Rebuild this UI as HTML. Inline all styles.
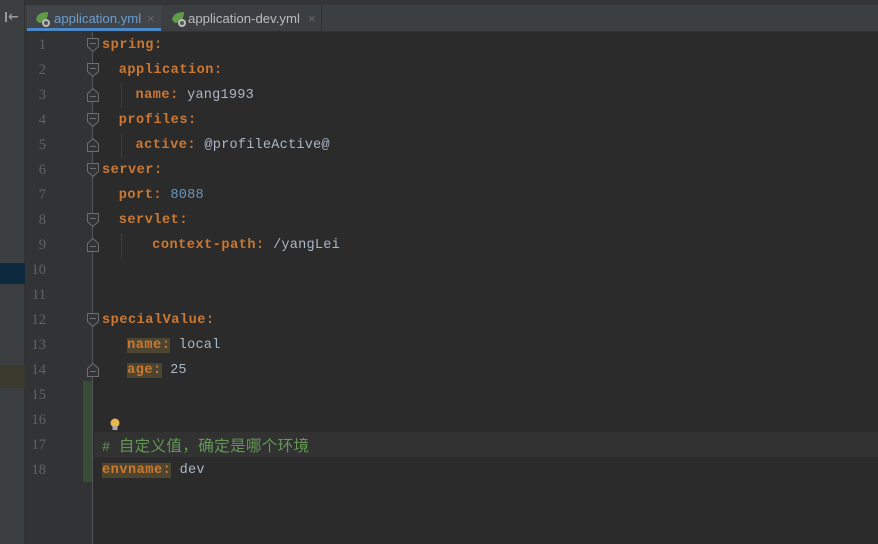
<!DOCTYPE html>
<html><head><meta charset="utf-8"><style>
*{margin:0;padding:0;box-sizing:border-box}
body{width:878px;height:544px;background:#2b2b2b;position:relative;overflow:hidden;font-family:"Liberation Mono","Noto Sans CJK SC",monospace}
.strip{position:absolute;left:0;top:0;width:25px;height:544px;background:#3c3f41;border-right:1px solid #2f3133}
.tabs{position:absolute;left:25px;top:0;right:0;height:32px;background:#3c3f41;border-top:5px solid #333537;border-bottom:1px solid #323232}
.tab{position:absolute;top:0;height:26px;font-family:"Liberation Sans",sans-serif;font-size:13.2px;line-height:27px;color:#bbbbbb}
.gut{position:absolute;left:25px;top:32px;width:68px;height:512px;background:#313335;border-right:1px solid #555}
.ln{position:absolute;left:25px;width:21px;text-align:right;color:#606366;font-family:"Liberation Serif",serif;font-size:14.5px;height:25px;line-height:25px}
.code{position:absolute;left:102px;font-size:13.6px;letter-spacing:0.2px;height:25px;line-height:25px;color:#a9b7c6;white-space:pre}
.k{color:#cc7832;font-weight:bold;letter-spacing:0.5px}
.n{color:#6897bb}
.hl{background:#4c452f}
.c{color:#629755}
.cj{font-family:"Noto Sans CJK SC",sans-serif;font-size:15.6px;letter-spacing:0.3px}
</style></head><body>
<div class="strip">
<svg width="25" height="32" style="position:absolute;top:0;left:0"><rect x="5" y="12" width="2" height="10" fill="#999"/><rect x="9" y="16" width="9" height="1.5" fill="#999"/><path d="M9 16.7 L12 14 M9 16.7 L12 19.5" stroke="#999" stroke-width="1.3" fill="none"/></svg>
<div style="position:absolute;top:263px;left:0;width:25px;height:21px;background:#0d293e"></div>
<div style="position:absolute;top:365px;left:0;width:25px;height:23px;background:#3a3a2e"></div>
</div>
<div class="tabs">
<div class="tab" style="left:2px;width:134px;background:#414448;border-bottom:3px solid #4a88c7;color:#6a9fcf">
<svg width="18" height="18" style="position:absolute;left:7px;top:5px"><path d="M2 10 Q3 2 14 2 Q14 12 5 13 Z" fill="#5f9a48"/><circle cx="12" cy="13" r="4" fill="#bbb"/><circle cx="12" cy="13" r="2" fill="#555"/></svg>
<span style="position:absolute;left:27px">application.yml</span><span style="position:absolute;left:120px;color:#666">×</span></div>
<div class="tab" style="left:137px;width:160px;border-right:1px solid #323232">
<svg width="18" height="18" style="position:absolute;left:8px;top:5px"><path d="M2 10 Q3 2 14 2 Q14 12 5 13 Z" fill="#5f9a48"/><circle cx="12" cy="13" r="4" fill="#bbb"/><circle cx="12" cy="13" r="2" fill="#555"/></svg>
<span style="position:absolute;left:26px">application-dev.yml</span><span style="position:absolute;left:146px;color:#666">×</span></div>
</div>
<div class="gut"></div>
<div style="position:absolute;left:83px;top:381px;width:9px;height:101px;background:#384c38"></div>
<div style="position:absolute;left:94px;top:432px;right:0;height:25px;background:#323232"></div>

<div class="ln" style="top:33px">1</div>
<div class="ln" style="top:58px">2</div>
<div class="ln" style="top:83px">3</div>
<div class="ln" style="top:108px">4</div>
<div class="ln" style="top:133px">5</div>
<div class="ln" style="top:158px">6</div>
<div class="ln" style="top:183px">7</div>
<div class="ln" style="top:208px">8</div>
<div class="ln" style="top:233px">9</div>
<div class="ln" style="top:258px">10</div>
<div class="ln" style="top:283px">11</div>
<div class="ln" style="top:308px">12</div>
<div class="ln" style="top:333px">13</div>
<div class="ln" style="top:358px">14</div>
<div class="ln" style="top:383px">15</div>
<div class="ln" style="top:408px">16</div>
<div class="ln" style="top:433px">17</div>
<div class="ln" style="top:458px">18</div>

<svg style="position:absolute;left:0;top:0" width="878" height="544">
<g fill="#313335" stroke="#6e6e6e" stroke-width="1">
<path d="M87.5 38.5h11v8l-5.5 5l-5.5-5z"/><path d="M87.5 63.5h11v8l-5.5 5l-5.5-5z"/>
<path d="M87.5 101.5h11v-8l-5.5-5l-5.5 5z"/><path d="M87.5 113.5h11v8l-5.5 5l-5.5-5z"/>
<path d="M87.5 151.5h11v-8l-5.5-5l-5.5 5z"/><path d="M87.5 163.5h11v8l-5.5 5l-5.5-5z"/>
<path d="M87.5 213.5h11v8l-5.5 5l-5.5-5z"/><path d="M87.5 251.5h11v-8l-5.5-5l-5.5 5z"/>
<path d="M87.5 313.5h11v8l-5.5 5l-5.5-5z"/><path d="M87.5 376.5h11v-8l-5.5-5l-5.5 5z"/>
</g>
<g stroke="#6e6e6e"><path d="M90 43.5h6M90 68.5h6M90 96.5h6M90 118.5h6M90 146.5h6M90 168.5h6M90 218.5h6M90 246.5h6M90 318.5h6M90 371.5h6"/></g>
<g stroke="#3d3d3d"><path d="M121.5 83v25M121.5 133v25M121.5 233v25"/></g>
<g transform="translate(115,423)"><circle r="4.5" fill="#e8b94a"/><rect x="-2.5" y="3" width="5" height="4" fill="#aaa"/></g>
</svg>

<div class="code" style="top:33px"><span class="k">spring:</span></div>
<div class="code" style="top:58px">  <span class="k">application:</span></div>
<div class="code" style="top:83px">    <span class="k">name:</span> yang1993</div>
<div class="code" style="top:108px">  <span class="k">profiles:</span></div>
<div class="code" style="top:133px">    <span class="k">active:</span> @profileActive@</div>
<div class="code" style="top:158px"><span class="k">server:</span></div>
<div class="code" style="top:183px">  <span class="k">port:</span> <span class="n">8088</span></div>
<div class="code" style="top:208px">  <span class="k">servlet:</span></div>
<div class="code" style="top:233px">      <span class="k">context-path:</span> /yangLei</div>
<div class="code" style="top:308px"><span class="k">specialValue:</span></div>
<div class="code" style="top:333px">   <span class="k hl">name:</span> local</div>
<div class="code" style="top:358px">   <span class="k hl">age:</span> 25</div>
<div class="code c" style="top:433px"># <span class="cj">自定义值，确定是哪个环境</span></div>
<div class="code" style="top:458px"><span class="k hl">envname:</span> dev</div>
</body></html>
